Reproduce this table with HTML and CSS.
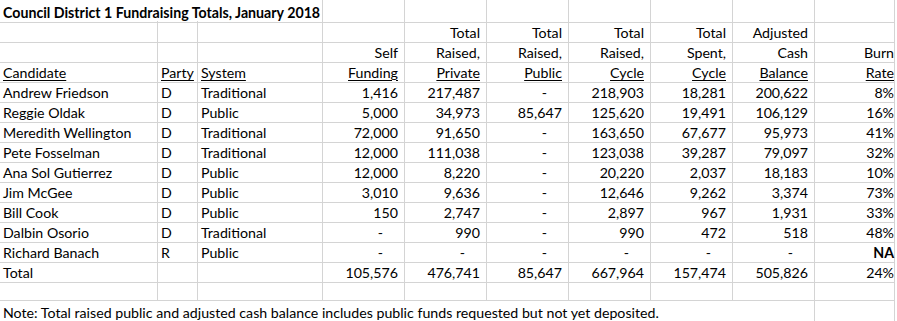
FILE: index.html
```html
<!DOCTYPE html>
<html lang="en">
<head>
    <meta charset="UTF-8">
    <title>Council District 1 Fundraising Totals</title>
    <link rel="stylesheet" href="styles.css">
</head>
<body>
    <div class="sheet">
        <!-- title -->
        <div class="row first">
            <div class="cell title span3">Council District 1 Fundraising Totals, January 2018</div>
            <div class="cell"></div><div class="cell"></div><div class="cell"></div><div class="cell"></div>
            <div class="cell"></div><div class="cell"></div><div class="cell"></div>
        </div>

        <!-- header lines -->
        <div class="row">
            <div class="cell"></div><div class="cell"></div><div class="cell"></div><div class="cell"></div>
            <div class="cell num">Total</div>
            <div class="cell num">Total</div>
            <div class="cell num">Total</div>
            <div class="cell num">Total</div>
            <div class="cell num">Adjusted</div>
            <div class="cell"></div>
        </div>
        <div class="row">
            <div class="cell"></div><div class="cell"></div><div class="cell"></div>
            <div class="cell num">Self</div>
            <div class="cell num">Raised,</div>
            <div class="cell num">Raised,</div>
            <div class="cell num">Raised,</div>
            <div class="cell num">Spent,</div>
            <div class="cell num">Cash</div>
            <div class="cell pct">Burn</div>
        </div>
        <div class="row">
            <div class="cell"><u>Candidate</u></div>
            <div class="cell"><u>Party</u></div>
            <div class="cell"><u>System</u></div>
            <div class="cell num"><u>Funding</u></div>
            <div class="cell num"><u>Private</u></div>
            <div class="cell num"><u>Public</u></div>
            <div class="cell num"><u>Cycle</u></div>
            <div class="cell num"><u>Cycle</u></div>
            <div class="cell num"><u>Balance</u></div>
            <div class="cell pct"><u>Rate</u></div>
        </div>

        <!-- candidates -->
        <div class="row">
            <div class="cell">Andrew Friedson</div><div class="cell">D</div><div class="cell">Traditional</div>
            <div class="cell num">1,416</div><div class="cell num">217,487</div><div class="cell dash">-</div>
            <div class="cell num">218,903</div><div class="cell num">18,281</div><div class="cell num">200,622</div>
            <div class="cell pct">8%</div>
        </div>
        <div class="row">
            <div class="cell">Reggie Oldak</div><div class="cell">D</div><div class="cell">Public</div>
            <div class="cell num">5,000</div><div class="cell num">34,973</div><div class="cell num">85,647</div>
            <div class="cell num">125,620</div><div class="cell num">19,491</div><div class="cell num">106,129</div>
            <div class="cell pct">16%</div>
        </div>
        <div class="row">
            <div class="cell">Meredith Wellington</div><div class="cell">D</div><div class="cell">Traditional</div>
            <div class="cell num">72,000</div><div class="cell num">91,650</div><div class="cell dash">-</div>
            <div class="cell num">163,650</div><div class="cell num">67,677</div><div class="cell num">95,973</div>
            <div class="cell pct">41%</div>
        </div>
        <div class="row">
            <div class="cell">Pete Fosselman</div><div class="cell">D</div><div class="cell">Traditional</div>
            <div class="cell num">12,000</div><div class="cell num">111,038</div><div class="cell dash">-</div>
            <div class="cell num">123,038</div><div class="cell num">39,287</div><div class="cell num">79,097</div>
            <div class="cell pct">32%</div>
        </div>
        <div class="row">
            <div class="cell">Ana Sol Gutierrez</div><div class="cell">D</div><div class="cell">Public</div>
            <div class="cell num">12,000</div><div class="cell num">8,220</div><div class="cell dash">-</div>
            <div class="cell num">20,220</div><div class="cell num">2,037</div><div class="cell num">18,183</div>
            <div class="cell pct">10%</div>
        </div>
        <div class="row">
            <div class="cell">Jim McGee</div><div class="cell">D</div><div class="cell">Public</div>
            <div class="cell num">3,010</div><div class="cell num">9,636</div><div class="cell dash">-</div>
            <div class="cell num">12,646</div><div class="cell num">9,262</div><div class="cell num">3,374</div>
            <div class="cell pct">73%</div>
        </div>
        <div class="row">
            <div class="cell">Bill Cook</div><div class="cell">D</div><div class="cell">Public</div>
            <div class="cell num">150</div><div class="cell num">2,747</div><div class="cell dash">-</div>
            <div class="cell num">2,897</div><div class="cell num">967</div><div class="cell num">1,931</div>
            <div class="cell pct">33%</div>
        </div>
        <div class="row">
            <div class="cell">Dalbin Osorio</div><div class="cell">D</div><div class="cell">Traditional</div>
            <div class="cell dash">-</div><div class="cell num">990</div><div class="cell dash">-</div>
            <div class="cell num">990</div><div class="cell num">472</div><div class="cell num">518</div>
            <div class="cell pct">48%</div>
        </div>
        <div class="row">
            <div class="cell">Richard Banach</div><div class="cell">R</div><div class="cell">Public</div>
            <div class="cell dash">-</div><div class="cell dash">-</div><div class="cell dash">-</div>
            <div class="cell dash">-</div><div class="cell dash">-</div><div class="cell dash">-</div>
            <div class="cell pct na">NA</div>
        </div>

        <!-- totals -->
        <div class="row">
            <div class="cell">Total</div><div class="cell"></div><div class="cell"></div>
            <div class="cell num">105,576</div><div class="cell num">476,741</div><div class="cell num">85,647</div>
            <div class="cell num">667,964</div><div class="cell num">157,474</div><div class="cell num">505,826</div>
            <div class="cell pct">24%</div>
        </div>
        <div class="row">
            <div class="cell"></div><div class="cell"></div><div class="cell"></div><div class="cell"></div><div class="cell"></div>
            <div class="cell"></div><div class="cell"></div><div class="cell"></div><div class="cell"></div><div class="cell"></div>
        </div>
        <div class="row">
            <div class="cell span9">Note: Total raised public and adjusted cash balance includes public funds requested but not yet deposited.</div>
            <div class="cell"></div>
        </div>
    </div>
</body>
</html>
```
FILE: styles.css
```css
body {
    margin: 0;
    background: #fff;
    color: #000;
    font-family: Lato, "Liberation Sans", sans-serif;
    font-size: 14.2px;
}

/* spreadsheet grid, widths include the 1px grid line on the right */
.sheet {
    width: 895px;
}

.row {
    display: grid;
    grid-template-columns: 158px 40px 125px repeat(6, 82px) 80px;
    height: 20px;
}

.row.first {
    height: 21px;
}

.cell {
    box-sizing: border-box;
    border-right: 1px solid #d4d4d4;
    border-bottom: 1px solid #d4d4d4;
    padding: 2px 0 0 3px;
    line-height: 19px;
    white-space: nowrap;
}

.row.first .cell {
    padding-top: 3px;
}

.cell u {
    text-decoration-thickness: 1px;
    text-underline-offset: 2px;
}

.title {
    font-weight: bold;
}

.span3 {
    grid-column: span 3;
}

.span9 {
    grid-column: span 9;
}

.num {
    text-align: right;
    padding-right: 6px;
}

.dash {
    text-align: right;
    padding-right: 21px;
}

.pct {
    text-align: right;
    padding-right: 0;
}

.na {
    font-weight: bold;
}
```
